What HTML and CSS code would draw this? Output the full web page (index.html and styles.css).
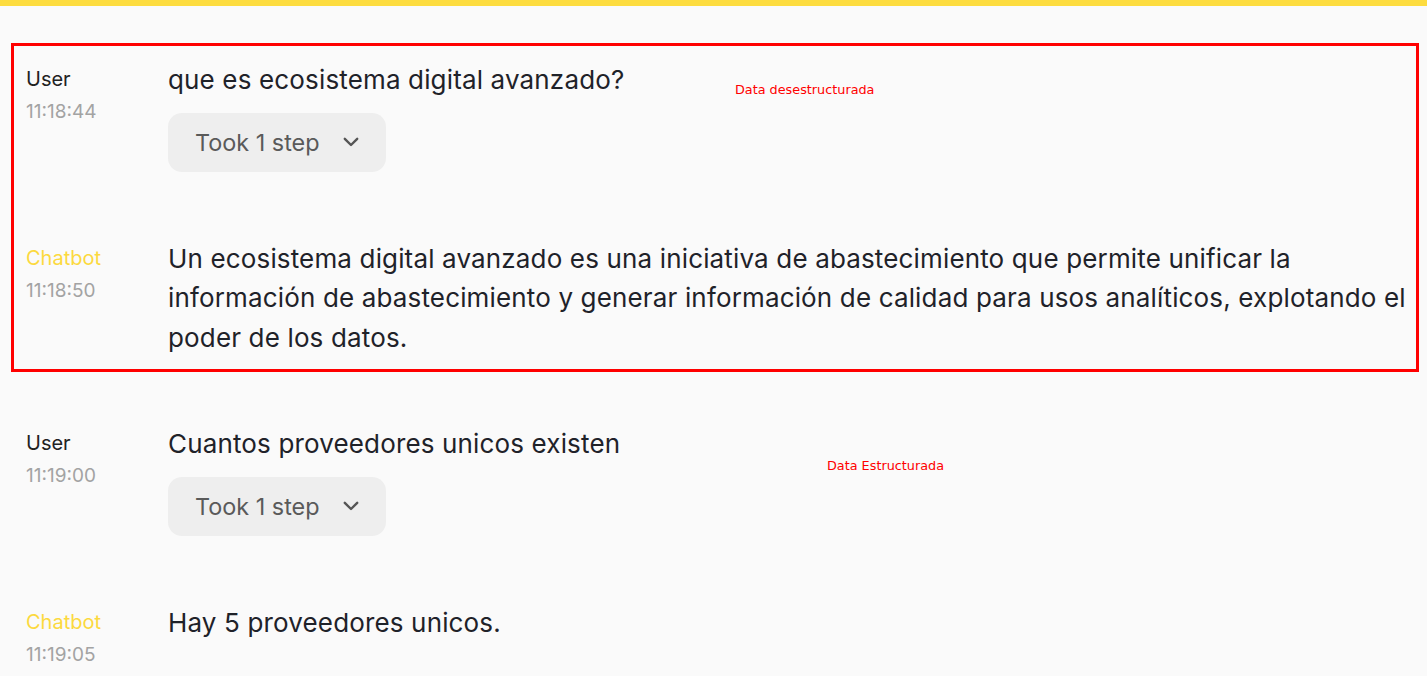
FILE: index.html
```html
<!DOCTYPE html>
<html lang="es">
<head>
<meta charset="utf-8">
<title>Chat</title>
<link rel="stylesheet" href="styles.css">
</head>
<body>
<div class="topbar"></div>
<main class="chat">
  <section class="group marked">
    <div class="row user-row">
      <div class="meta">
        <div class="who user">User</div>
        <div class="time">11:18:44</div>
      </div>
      <div class="body">
        <p class="msg">que es ecosistema digital avanzado?</p>
        <button class="steps">Took 1 step
          <svg class="chev" width="16" height="10" viewBox="0 0 16 10"><path d="M1.8 1.8 L8 8 L14.2 1.8" fill="none" stroke="#555" stroke-width="2.4" stroke-linecap="round" stroke-linejoin="round"/></svg>
        </button>
      </div>
    </div>
    <div class="row bot-row">
      <div class="meta">
        <div class="who bot">Chatbot</div>
        <div class="time">11:18:50</div>
      </div>
      <div class="body">
        <p class="msg">Un ecosistema digital avanzado es una iniciativa de abastecimiento que permite unificar la información de abastecimiento y generar información de calidad para usos analíticos, explotando el poder de los datos.</p>
      </div>
    </div>
    <span class="note note-1">Data desestructurada</span>
  </section>
  <section class="group plain">
    <div class="row user-row">
      <div class="meta">
        <div class="who user">User</div>
        <div class="time">11:19:00</div>
      </div>
      <div class="body">
        <p class="msg">Cuantos proveedores unicos existen</p>
        <button class="steps">Took 1 step
          <svg class="chev" width="16" height="10" viewBox="0 0 16 10"><path d="M1.8 1.8 L8 8 L14.2 1.8" fill="none" stroke="#555" stroke-width="2.4" stroke-linecap="round" stroke-linejoin="round"/></svg>
        </button>
      </div>
    </div>
    <div class="row bot-row">
      <div class="meta">
        <div class="who bot">Chatbot</div>
        <div class="time">11:19:05</div>
      </div>
      <div class="body">
        <p class="msg">Hay 5 proveedores unicos.</p>
      </div>
    </div>
    <span class="note note-2">Data Estructurada</span>
  </section>
</main>
</body>
</html>
```
FILE: styles.css
```css
* { box-sizing: border-box; }
html, body { margin: 0; padding: 0; }
body {
  background: #fafafa;
  font-family: Inter, "Noto Sans", sans-serif;
  color: #1f2229;
  width: 1427px;
  height: 676px;
  overflow: hidden;
}
.topbar {
  height: 6px;
  background: #fddc3f;
}
.chat {
  display: flex;
  flex-direction: column;
  padding-top: 37px;
}
.group {
  position: relative;
  display: flex;
  flex-direction: column;
  gap: 67px;
}
.marked {
  margin: 0 8px 0 11px;
  border: 3px solid #ff0000;
  padding: 14px 0 12px 12px;
}
.plain {
  margin-top: 52px;
  padding-left: 26px;
}
.row {
  display: grid;
  grid-template-columns: 142px 1fr;
}
.meta {
  display: flex;
  flex-direction: column;
  gap: 5px;
  padding-top: 5px;
}
.who {
  font-size: 20px;
  line-height: 28px;
}
.who.user { color: #222; }
.who.bot { color: #fcd93e; }
.time {
  font-size: 19px;
  line-height: 28px;
  color: #a3a3a3;
}
.msg {
  margin: 0;
  font-size: 26px;
  letter-spacing: 0.15px;
  line-height: 39.6px;
  color: #1f2229;
}
.steps {
  margin-top: 13px;
  display: inline-flex;
  align-items: center;
  gap: 23px;
  height: 59px;
  padding: 0 27px 0 27px;
  border: none;
  border-radius: 14px;
  background: #eeeeee;
  font-family: Inter, "Noto Sans", sans-serif;
  font-size: 23.4px;
  color: #5a5a5a;
}
.chev { display: block; }
.note {
  position: absolute;
  font-family: "DejaVu Sans", sans-serif;
  font-size: 12.8px;
  line-height: 15px;
  color: #ff0000;
}
.note-1 { left: 721px; top: 36px; }
.note-2 { left: 827px; top: 34px; }
```
